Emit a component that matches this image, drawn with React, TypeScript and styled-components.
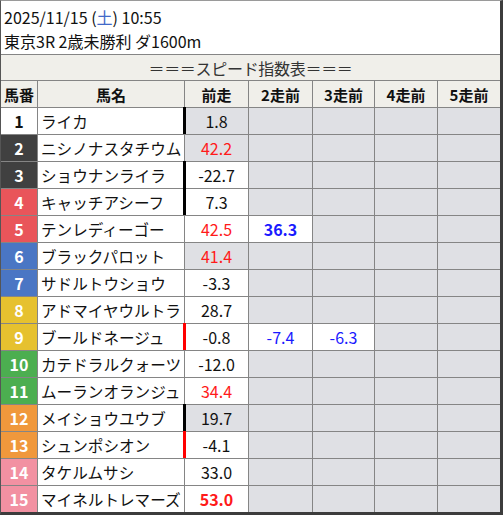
import React from "react";
import styled, { createGlobalStyle } from "styled-components";

const GlobalStyle = createGlobalStyle`
    body {
        margin: 0;
        background: #ffffff;
        font-family: "Noto Sans CJK JP", "Noto Sans", sans-serif;
    }
`;

const Frame = styled.div`
    width: 499px;
    display: grid;
    grid-template-columns: 36px 146px 63px 63px 61px 62px 62px;
    grid-template-rows: 53px 25px 26px;
    grid-auto-rows: 26px;
    gap: 1px;
    background: #858585;
    border-left: 1px solid #555555;
    border-top: 1px solid #9a9a9a;
    border-right: 3px solid #3c3c3c;
    border-bottom: 3px solid #3c3c3c;
`;

const Info = styled.div`
    grid-column: 1 / -1;
    background: #ffffff;
    padding: 4px 3px 0;
    font-size: 16px;
    line-height: 24px;
    color: #111111;
    white-space: nowrap;

    .sat {
        color: #4169c8;
    }
`;

const Title = styled.div`
    grid-column: 1 / -1;
    background: #f0efea;
    display: flex;
    align-items: center;
    justify-content: center;
    font-size: 16px;
    color: #333333;
    letter-spacing: -0.3px;
`;

const HeadCell = styled.div`
    background: #f0efea;
    display: flex;
    align-items: center;
    justify-content: center;
    font-size: 15px;
    font-weight: bold;
    color: #111111;
    white-space: nowrap;
`;

const NumCell = styled.div<{ $bg: string; $fg: string }>`
    background: ${(p) => p.$bg};
    color: ${(p) => p.$fg};
    display: flex;
    align-items: center;
    justify-content: center;
    font-size: 16px;
    font-weight: bold;
`;

const NameCell = styled.div`
    background: #ffffff;
    display: flex;
    align-items: center;
    padding-left: 3px;
    font-size: 15.6px;
    color: #111111;
    white-space: nowrap;
    overflow: hidden;
`;

const ValueCell = styled.div<{ $gray?: boolean; $color?: string; $bold?: boolean; $mark?: string }>`
    position: relative;
    background: ${(p) => (p.$gray ? "#dfe0e4" : "#ffffff")};
    color: ${(p) => p.$color || "#111111"};
    font-weight: ${(p) => (p.$bold ? "bold" : "normal")};
    display: flex;
    align-items: center;
    justify-content: center;
    font-size: 16px;

    &::before {
        content: "";
        display: ${(p) => (p.$mark ? "block" : "none")};
        position: absolute;
        left: -2px;
        top: -1px;
        bottom: 0;
        width: 3px;
        background: ${(p) => p.$mark};
    }
`;

type Cell = { v?: string; color?: string; bold?: boolean; white?: boolean };

type Row = {
    no: number;
    name: string;
    last: string;
    lastColor?: string;
    lastBold?: boolean;
    lastGray?: boolean;
    mark?: string;
    prev?: Cell[];
};

const RED = "#ff1a1a";
const BLUE = "#1a1aff";

const waku: Record<number, [string, string]> = {
    1: ["#ffffff", "#111111"],
    2: ["#404040", "#ffffff"],
    3: ["#404040", "#ffffff"],
    4: ["#e9555a", "#ffffff"],
    5: ["#e9555a", "#ffffff"],
    6: ["#4a76c4", "#ffffff"],
    7: ["#4a76c4", "#ffffff"],
    8: ["#e6c12f", "#ffffff"],
    9: ["#e6c12f", "#ffffff"],
    10: ["#4cae50", "#ffffff"],
    11: ["#4cae50", "#ffffff"],
    12: ["#f0983c", "#ffffff"],
    13: ["#f0983c", "#ffffff"],
    14: ["#f291a2", "#ffffff"],
    15: ["#f291a2", "#ffffff"],
};

const rows: Row[] = [
    { no: 1, name: "ライカ", last: "1.8", lastGray: true, mark: "#000000" },
    { no: 2, name: "ニシノナスタチウム", last: "42.2", lastColor: RED, lastGray: true },
    { no: 3, name: "ショウナンライラ", last: "-22.7", mark: "#000000" },
    { no: 4, name: "キャッチアシーフ", last: "7.3", mark: "#000000" },
    {
        no: 5,
        name: "テンレディーゴー",
        last: "42.5",
        lastColor: RED,
        prev: [{ v: "36.3", color: BLUE, bold: true, white: true }],
    },
    { no: 6, name: "ブラックパロット", last: "41.4", lastColor: RED, lastGray: true },
    { no: 7, name: "サドルトウショウ", last: "-3.3" },
    { no: 8, name: "アドマイヤウルトラ", last: "28.7" },
    {
        no: 9,
        name: "ブールドネージュ",
        last: "-0.8",
        mark: "#ff0000",
        prev: [
            { v: "-7.4", color: BLUE, white: true },
            { v: "-6.3", color: BLUE, white: true },
        ],
    },
    { no: 10, name: "カテドラルクォーツ", last: "-12.0" },
    { no: 11, name: "ムーランオランジュ", last: "34.4", lastColor: RED },
    { no: 12, name: "メイショウユウブ", last: "19.7", lastGray: true, mark: "#000000" },
    { no: 13, name: "シュンポシオン", last: "-4.1", mark: "#ff0000" },
    { no: 14, name: "タケルムサシ", last: "33.0" },
    { no: 15, name: "マイネルトレマーズ", last: "53.0", lastColor: RED, lastBold: true },
];

const heads = ["馬番", "馬名", "前走", "2走前", "3走前", "4走前", "5走前"];

function App() {
    return (
        <>
            <GlobalStyle />
            <Frame>
                <Info>
                    <div>
                        2025/11/15 (<span className="sat">土</span>) 10:55
                    </div>
                    <div>東京3R 2歳未勝利 ダ1600m</div>
                </Info>
                <Title>＝＝＝スピード指数表＝＝＝</Title>
                {heads.map((h) => (
                    <HeadCell key={h}>{h}</HeadCell>
                ))}
                {rows.map((r) => {
                    const prev: Cell[] = [0, 1, 2, 3].map((i) => (r.prev && r.prev[i]) || {});
                    return (
                        <React.Fragment key={r.no}>
                            <NumCell $bg={waku[r.no][0]} $fg={waku[r.no][1]}>
                                {r.no}
                            </NumCell>
                            <NameCell>{r.name}</NameCell>
                            <ValueCell
                                $gray={r.lastGray}
                                $color={r.lastColor}
                                $bold={r.lastBold}
                                $mark={r.mark}
                            >
                                {r.last}
                            </ValueCell>
                            {prev.map((c, i) => (
                                <ValueCell key={i} $gray={!c.white} $color={c.color} $bold={c.bold}>
                                    {c.v}
                                </ValueCell>
                            ))}
                        </React.Fragment>
                    );
                })}
            </Frame>
        </>
    );
}

export default App;
